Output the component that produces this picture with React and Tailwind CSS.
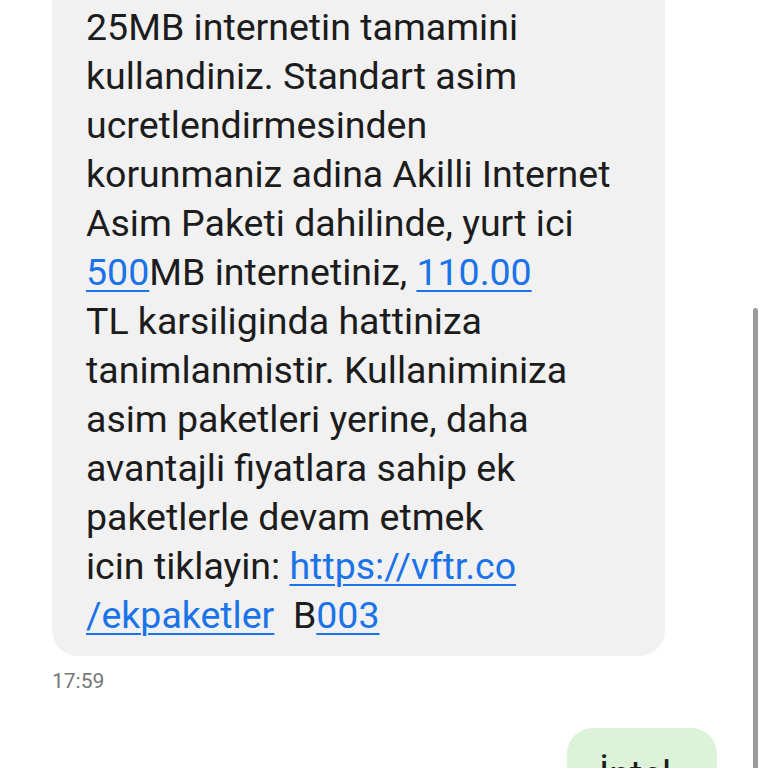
import React from "react";

const L = ({ children }) => (
  <span className="text-[#1a73e8] underline decoration-[2px] underline-offset-[5px]">{children}</span>
);

export default function App() {
  return (
    <div className="relative w-[768px] h-[768px] overflow-hidden bg-white" style={{ fontFamily: "Roboto, 'Noto Sans', sans-serif" }}>
      <div className="flex flex-col">
        <div className="ml-[52px] mt-[-30px] w-[613px] rounded-[26px] bg-[#f1f1f1] pl-[34px] pr-[16px] pt-[33px] pb-[16px] text-[37.5px] leading-[49px] text-[#1c1c1c]">
          25MB internetin tamamini<br />
          kullandiniz. Standart asim<br />
          ucretlendirmesinden<br />
          korunmaniz adina Akilli Internet<br />
          Asim Paketi dahilinde, yurt ici<br />
          <L>500</L>MB internetiniz, <L>110.00</L><br />
          TL karsiliginda hattiniza<br />
          tanimlanmistir. Kullaniminiza<br />
          asim paketleri yerine, daha<br />
          avantajli fiyatlara sahip ek<br />
          paketlerle devam etmek<br />
          icin tiklayin: <L>https://vftr.co</L><br />
          <L>/ekpaketler</L>&nbsp; B<L>003</L>
        </div>
        <div className="ml-[52px] mt-[12px] text-[21px] leading-[26px] text-[#777777]">17:59</div>
        <div className="ml-[567px] mt-[34px] w-[150px] h-[80px] rounded-t-[26px] bg-[#dcf3da] pl-[32px] pt-[22px] text-[37.5px] leading-[49px] text-[#1c1c1c]">
          İntel
        </div>
      </div>
      <div className="absolute left-[753px] top-[308px] w-[5px] h-[470px] rounded-full bg-[#9c9c9c]" />
    </div>
  );
}
